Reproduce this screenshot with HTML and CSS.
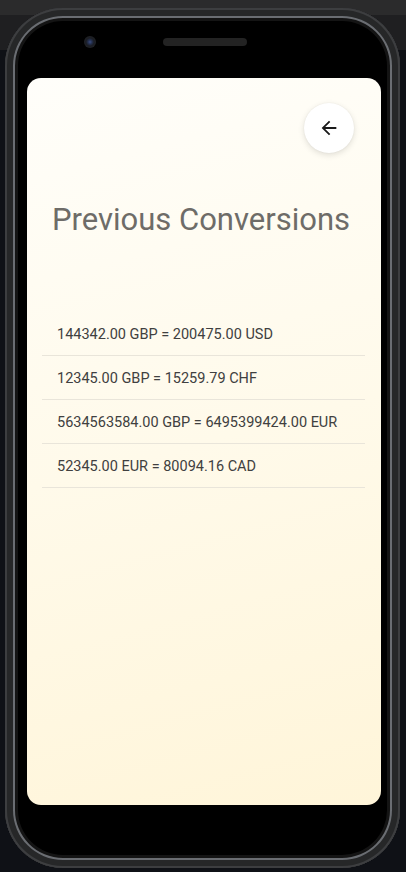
FILE: index.html
```html
<!DOCTYPE html>
<html>
<head>
<meta charset="utf-8">
<link rel="stylesheet" href="styles.css">
</head>
<body>
<div class="ide-bar"></div>
<div class="phone">
  <div class="bezel-top">
    <span class="camera"></span>
    <span class="speaker"></span>
  </div>
  <div class="screen">
    <div class="header">
      <button class="back" aria-label="Back">
        <svg width="22" height="22" viewBox="0 0 24 24"><path d="M20 11H7.83l5.59-5.59L12 4l-8 8 8 8 1.41-1.41L7.83 13H20v-2z" fill="#1a1a1a"/></svg>
      </button>
    </div>
    <h1 class="title">Previous Conversions</h1>
    <ul class="list">
      <li class="row">144342.00 GBP = 200475.00 USD</li>
      <li class="row">12345.00 GBP = 15259.79 CHF</li>
      <li class="row">5634563584.00 GBP = 6495399424.00 EUR</li>
      <li class="row">52345.00 EUR = 80094.16 CAD</li>
    </ul>
  </div>
</div>
</body>
</html>
```

FILE: styles.css
```css
html, body {
  margin: 0;
  padding: 0;
}
body {
  width: 406px;
  height: 872px;
  overflow: hidden;
  background: linear-gradient(180deg, #1f1f21 0px, #1f1f21 50px, #0f1116 50px, #0f1116 100%);
  font-family: Roboto, "Noto Sans", sans-serif;
  position: relative;
}
.ide-bar {
  height: 15px;
  background: #2b2b2c;
}
.phone {
  box-sizing: border-box;
  margin: -7px 0 0 5px;
  width: 395px;
  height: 860px;
  border-radius: 58px;
  background: #000;
  padding: 0 19px 0 22px;
  box-shadow:
    inset 0 0 0 2px #3d3e40,
    inset 0 0 0 8px #262728,
    inset 0 0 0 10px #6a6d72,
    inset 0 0 0 13px #141414;
}
.bezel-top {
  height: 70px;
  display: flex;
  align-items: center;
}
.camera {
  margin-left: 57px;
  margin-top: -2px;
  width: 12px;
  height: 12px;
  border-radius: 50%;
  background: radial-gradient(circle, #3b4c82 0, #24304f 2px, #1a1c22 4px, #202226 6px);
}
.speaker {
  margin-left: 67px;
  margin-top: -2px;
  width: 84px;
  height: 8px;
  border-radius: 4px;
  background: #232323;
}
.screen {
  height: 727px;
  border-radius: 14px;
  overflow: hidden;
  background: linear-gradient(165deg, #fffefa 0%, #fffaea 50%, #fff5d9 100%);
}
.header {
  display: flex;
  justify-content: flex-end;
  padding: 25px 27px 0 0;
}
.back {
  width: 50px;
  height: 50px;
  border-radius: 50%;
  border: none;
  background: #fff;
  box-shadow: 0 2px 6px rgba(0, 0, 0, 0.12), 0 0 2px rgba(0, 0, 0, 0.06);
  display: flex;
  align-items: center;
  justify-content: center;
  padding: 0;
}
.title {
  margin: 47px 0 0 0;
  padding-right: 6px;
  height: 40px;
  line-height: 40px;
  text-align: center;
  font-weight: 400;
  font-size: 31px;
  color: #6e6c68;
}
.list {
  list-style: none;
  margin: 72px 16px 0 15px;
  padding: 0;
}
.row {
  box-sizing: border-box;
  height: 44px;
  line-height: 45px;
  padding-left: 15px;
  font-size: 14.5px;
  color: #404040;
  border-bottom: 1px solid #e9e5da;
}
```
